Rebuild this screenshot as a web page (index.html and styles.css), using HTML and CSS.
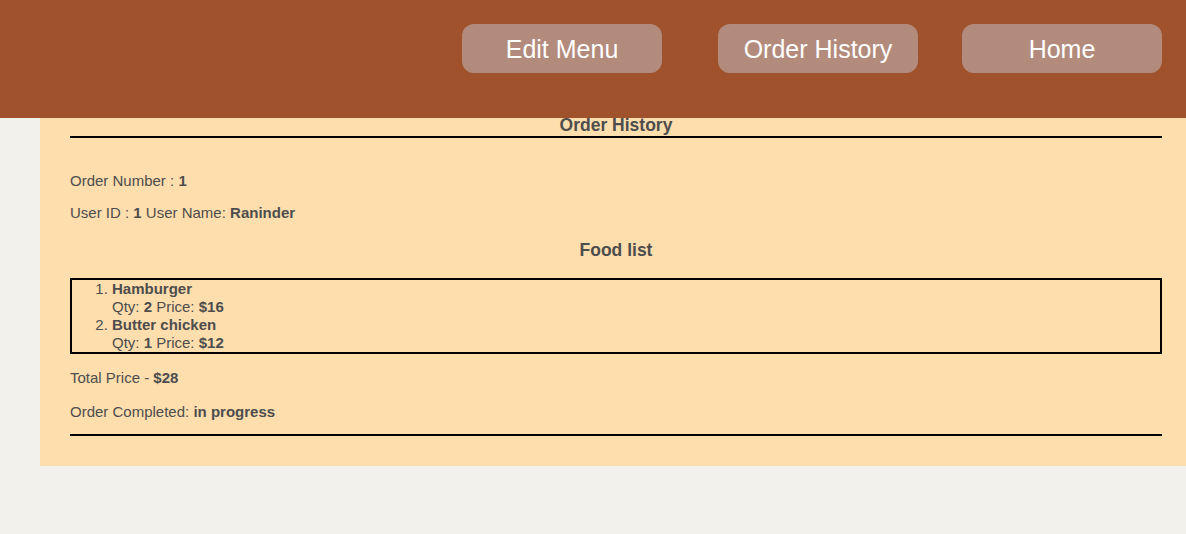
FILE: index.html
```html
<!DOCTYPE html>
<html>
<head>
<meta charset="utf-8">
<link rel="stylesheet" href="styles.css">
</head>
<body>
<header class="topbar">
  <nav class="nav">
    <a class="nav-btn nav-btn-first">Edit Menu</a>
    <a class="nav-btn">Order History</a>
    <a class="nav-btn">Home</a>
  </nav>
</header>
<main class="panel">
  <h2 class="title">Order History</h2>
  <hr class="rule">
  <p class="line first">Order Number : <b>1</b></p>
  <p class="line">User ID : <b>1</b> User Name: <b>Raninder</b></p>
  <h3 class="sub">Food list</h3>
  <ol class="foods">
    <li><b>Hamburger</b><br>Qty: <b>2</b> Price: <b>$16</b></li>
    <li><b>Butter chicken</b><br>Qty: <b>1</b> Price: <b>$12</b></li>
  </ol>
  <p class="line total">Total Price - <b>$28</b></p>
  <p class="line status">Order Completed: <b>in progress</b></p>
  <hr class="rule bottom">
</main>
</body>
</html>
```

FILE: styles.css
```css
html, body {
  margin: 0;
  padding: 0;
}
body {
  background: #f2f1ec;
  font-family: "Liberation Sans", Arial, Helvetica, sans-serif;
  color: #4d4d4d;
  height: 534px;
}
.topbar {
  background: #a0522d;
  height: 118px;
  display: flex;
  justify-content: flex-end;
  align-items: flex-start;
  padding: 0 24px 0 0;
  box-sizing: border-box;
  position: relative;
  z-index: 1;
}
.nav {
  display: flex;
  gap: 44px;
  margin-top: 24px;
}
.nav-btn {
  width: 200px;
  height: 49px;
  box-sizing: border-box;
  padding-top: 2px;
  border-radius: 12px;
  background: #b38b7c;
  color: #ffffff;
  font-size: 25px;
  display: flex;
  align-items: center;
  justify-content: center;
  cursor: pointer;
}
.nav-btn-first {
  margin-right: 12px;
}
.panel {
  margin-left: 40px;
  margin-top: -3px;
  background: #ffdead;
  padding: 0 24px 30px 30px;
}
.title {
  margin: 0;
  font-size: 17.5px;
  line-height: 21px;
  text-align: center;
  font-weight: bold;
}
.rule {
  margin: 0;
  border: 0;
  height: 2px;
  background: #000;
}
.line {
  margin: 14px 0 0;
  font-size: 15px;
  line-height: 18px;
}
.line.first {
  margin-top: 34px;
}
.sub {
  margin: 18px 0 0;
  font-size: 17.5px;
  line-height: 20px;
  text-align: center;
}
.foods {
  margin: 18px 0 0;
  border: 2px solid #000;
  padding: 0 0 0 40px;
  font-size: 15px;
  line-height: 18px;
}
.line.total {
  margin-top: 15px;
}
.line.status {
  margin-top: 16px;
}
.rule.bottom {
  margin-top: 13px;
}
```
